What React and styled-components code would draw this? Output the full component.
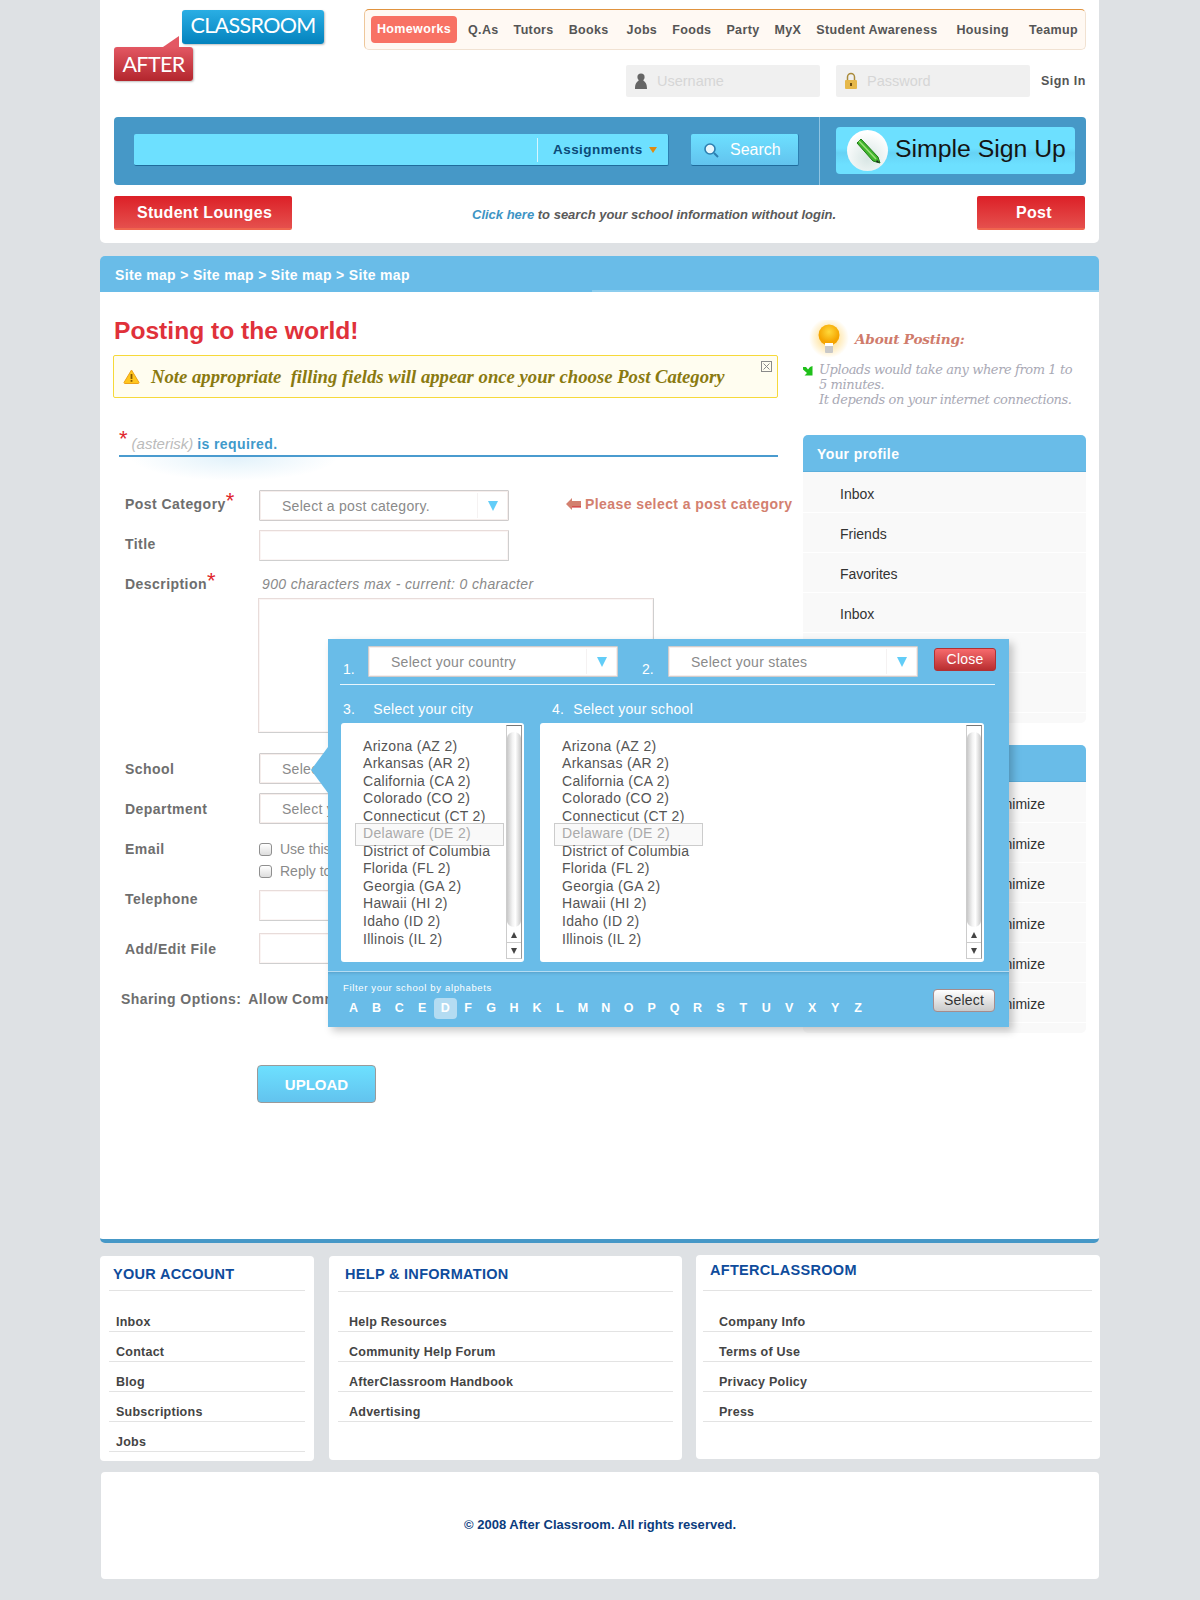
import React from "react";
import styled, { createGlobalStyle } from "styled-components";

const Global = createGlobalStyle`
  html, body { margin: 0; padding: 0; background: #dee1e4; }
  body { font-family: "Liberation Sans", Arial, sans-serif; }
  * { box-sizing: border-box; }
`;

const Page = styled.div`
  width: 1000px;
  height: 1600px;
  margin: 0 auto;
`;

/* header */
const Header = styled.header`
  width: 999px;
  height: 243px;
  background: #fff;
  padding: 0 13px 0 14px;
  border-radius: 0 0 5px 5px;
`;
const TopRow = styled.div`
  display: flex;
  justify-content: space-between;
  height: 117px;
`;
const Logo = styled.div`
  width: 210px;
  padding-top: 10px;
  display: flex;
  flex-direction: column;
  align-items: flex-start;
`;
const LogoTop = styled.div`
  margin-left: 68px;
  width: 142px;
  height: 34px;
  background: linear-gradient(#2aaee4, #0382bd);
  border-radius: 3px;
  box-shadow: 1px 1px 2px rgba(0, 0, 0, 0.25);
  color: #fff;
  font: 21.5px/31px Lato, sans-serif;
  letter-spacing: -0.65px;
  text-align: center;
`;
const LogoBottom = styled.div`
  position: relative;
  margin-top: 3px;
  width: 79px;
  height: 34px;
  background: linear-gradient(#e35863, #b3262d);
  border-radius: 3px;
  box-shadow: 1px 1px 2px rgba(0, 0, 0, 0.25);
  color: #fff;
  font: 21.5px/35px Lato, sans-serif;
  letter-spacing: -0.65px;
  text-align: center;
  &::before {
    content: "";
    position: absolute;
    left: 49px;
    top: -11px;
    width: 16px;
    height: 11px;
    background: #e35863;
    clip-path: polygon(0 100%, 100% 0, 100% 100%);
  }
`;
const TopRight = styled.div`
  width: 722px;
  padding-top: 9px;
`;
const Nav = styled.nav`
  height: 41px;
  display: flex;
  align-items: center;
  padding-left: 6px;
  background: #fff9f3;
  border: 1px solid #f1e2d2;
  border-top-color: #e0933f;
  border-left-color: #eec79a;
  border-radius: 5px;
`;
const NavItem = styled.a`
  flex: none;
  font-size: 12.5px;
  font-weight: 700;
  letter-spacing: 0.35px;
  color: #555;
  white-space: nowrap;
  margin-left: ${(p) => p.$gap || 15}px;
  ${(p) =>
    p.$active &&
    `
    margin-left: 0;
    margin-right: -5px;
    width: 86px;
    height: 27px;
    line-height: 27px;
    text-align: center;
    color: #fff;
    background: #f87264;
    border-radius: 4px;
  `}
`;
const LoginRow = styled.div`
  margin-top: 15px;
  display: flex;
  justify-content: flex-end;
  align-items: center;
  gap: 16px;
`;
const LoginField = styled.div`
  width: 194px;
  height: 32px;
  background: #f0f0f0;
  border-radius: 2px;
  display: flex;
  align-items: center;
  padding-left: 8px;
  gap: 9px;
  color: #d6d6d6;
  font-size: 14.5px;
`;
const SignIn = styled.a`
  flex: none;
  width: 44px;
  margin-left: -5px;
  margin-right: 1px;
  font-size: 12.5px;
  font-weight: 700;
  letter-spacing: 0.45px;
  color: #555;
  white-space: nowrap;
`;

const SearchBar = styled.div`
  height: 68px;
  background: #4698c7;
  border-radius: 4px;
  display: flex;
  align-items: flex-start;
`;
const SearchInput = styled.div`
  margin: 17px 0 0 20px;
  width: 535px;
  height: 32px;
  background: #6de0ff;
  border-bottom: 1px solid #1f6c9c;
  border-right: 1px solid #2d7fb0;
  border-radius: 2px;
  display: flex;
  align-items: center;
  justify-content: flex-end;
  padding-right: 9px;
`;
const Category = styled.div`
  width: 122px;
  height: 24px;
  border-left: 1px solid #d7f6ff;
  padding-left: 15px;
  display: flex;
  align-items: center;
  gap: 6px;
  color: #0b4a78;
  font-size: 13.5px;
  font-weight: 700;
  letter-spacing: 0.45px;
  white-space: nowrap;
  &::after {
    content: "";
    border: 4px solid transparent;
    border-top: 6px solid #e08a10;
    border-bottom: 0;
  }
`;
const SearchButton = styled.div`
  margin: 17px 0 0 22px;
  width: 108px;
  height: 32px;
  background: linear-gradient(#6de0ff, #62c3ee);
  border-bottom: 1px solid #1f6c9c;
  border-right: 1px solid #2d7fb0;
  border-radius: 2px;
  display: flex;
  align-items: center;
  padding-left: 12px;
  gap: 11px;
  color: #fff;
  font-size: 16px;
`;
const Divider = styled.div`
  margin-left: 20px;
  width: 1px;
  height: 68px;
  background: #8fc4e2;
`;
const SignUp = styled.div`
  margin: 10px 0 0 16px;
  width: 239px;
  height: 47px;
  border-radius: 4px;
  background: linear-gradient(#6de0ff 0 45%, #66d2f5 55%, #6de0ff 80%);
  display: flex;
  align-items: center;
  padding-left: 11px;
  gap: 7px;
  color: #141414;
  font-size: 24.8px;
  white-space: nowrap;
`;
const SignUpText = styled.span`
  padding-bottom: 3px;
`;
const SignCircle = styled.div`
  width: 41px;
  height: 41px;
  border-radius: 50%;
  background: radial-gradient(circle at 50% 70%, #d8e6e4, #fff 75%);
  display: flex;
  align-items: center;
  justify-content: center;
`;
const ActionRow = styled.div`
  margin-top: 11px;
  padding-right: 1px;
  display: flex;
  align-items: center;
`;
const RedButton = styled.a`
  flex: none;
  width: ${(p) => p.$w}px;
  height: 34px;
  padding-left: ${(p) => p.$pl || 0}px;
  background: linear-gradient(#dc2027, #e5504d);
  border-bottom: 2px solid #f0654e;
  border-radius: 2px;
  color: #fff;
  font-size: 16px;
  font-weight: 700;
  letter-spacing: 0.3px;
  line-height: 33px;
  text-align: center;
`;
const ClickText = styled.p`
  margin: 3px auto 0 180px;
  font-size: 13px;
  font-weight: 700;
  font-style: italic;
  color: #5a5a5a;
  white-space: nowrap;
  b {
    color: #3d94c4;
  }
`;

/* breadcrumb */
const Breadcrumb = styled.div`
  position: relative;
  margin-top: 13px;
  height: 36px;
  width: 999px;
  padding-left: 15px;
  background: #69bce8;
  border-radius: 5px 5px 0 0;
  color: #fff;
  font-size: 14px;
  font-weight: 700;
  letter-spacing: 0.33px;
  line-height: 38px;
  &::after {
    content: "";
    position: absolute;
    left: 492px;
    right: 0;
    bottom: 0;
    height: 2px;
    background: #8ccdee;
  }
`;

/* main */
const Main = styled.main`
  position: relative;
  width: 999px;
  height: 951px;
  background: #fff;
  border-bottom: 4px solid #4698c7;
  border-radius: 0 0 5px 5px;
  display: flex;
`;
const Left = styled.div`
  width: 703px;
  padding: 24px 0 0 13px;
`;
const Title = styled.h1`
  margin: 0 0 0 1px;
  height: 30px;
  color: #e0313a;
  font-size: 24.6px;
  line-height: 30px;
  font-weight: 700;
`;
const Note = styled.div`
  position: relative;
  margin-top: 9px;
  width: 665px;
  height: 43px;
  background: #fffdf0;
  border: 1px solid #f6d93a;
  border-radius: 2px;
  display: flex;
  align-items: center;
  padding-left: 9px;
  gap: 11px;
  color: #8a7a10;
  font: italic 700 18.7px "Liberation Serif", serif;
  white-space: pre;
`;
const NoteClose = styled.span`
  position: absolute;
  right: 5px;
  top: 5px;
  display: flex;
`;
const Required = styled.div`
  position: relative;
  margin: 30px 0 0 6px;
  width: 659px;
  height: 29px;
  border-bottom: 2px solid #4a9bcf;
  display: flex;
  align-items: flex-end;
  padding-bottom: 3px;
  font-size: 14px;
  &::after {
    content: "";
    position: absolute;
    left: 10px;
    top: 29px;
    width: 210px;
    height: 24px;
    background: radial-gradient(ellipse at 50% 0, rgba(105, 188, 232, 0.2), rgba(105, 188, 232, 0) 70%);
  }
`;
const Star = styled.span`
  margin-top: 3px;
  color: #e0262d;
  font-size: 22px;
  line-height: 16px;
  align-self: flex-start;
`;
const Hint = styled.em`
  margin-left: 4px;
  color: #bbb;
  font-size: 15px;
`;
const ReqText = styled.b`
  margin-left: 4px;
  color: #3f9acb;
  letter-spacing: 0.4px;
`;
const Form = styled.div`
  margin-left: 12px;
`;
const Row = styled.div`
  position: relative;
  display: flex;
  margin-top: ${(p) => p.$mt}px;
`;
const Label = styled.div`
  flex: none;
  width: 134px;
  padding-top: ${(p) => p.$pt || 0}px;
  line-height: ${(p) => p.$lh || 26}px;
  color: #6e6e6e;
  font-size: 14px;
  font-weight: 700;
  letter-spacing: 0.45px;
  display: flex;
  align-items: flex-start;
  white-space: nowrap;
`;
const LabelStar = styled.span`
  color: #e0262d;
  font-size: 22px;
  font-weight: 400;
  line-height: 20px;
`;
const SelectBox = styled.div`
  width: 250px;
  height: 31px;
  flex: none;
  background: #fff;
  border: 1px solid #cfcccc;
  box-shadow: inset 0 0 0 1px #f6eeec;
  border-radius: 1px;
  display: flex;
  align-items: center;
  padding-left: 22px;
  color: #8a8a8a;
  font-size: 14px;
  letter-spacing: 0.28px;
  white-space: nowrap;
`;
const SelectText = styled.span`
  flex: 1;
`;
const SelectArrow = styled.span`
  flex: none;
  width: 31px;
  height: 25px;
  border-left: 1px solid #f5f2f2;
  display: flex;
  align-items: center;
  justify-content: center;
  &::after {
    content: "";
    border: 5.5px solid transparent;
    border-top: 10px solid #62cdf8;
    border-bottom: 0;
  }
`;
const TextField = styled.div`
  width: 250px;
  height: 31px;
  border: 1px solid #cfcfcf;
  border-left-color: #e8dcda;
  border-top-color: #e8dcda;
  border-radius: 1px;
  box-shadow: inset 0 0 0 1px #fbf5f4;
`;
const FieldColumn = styled.div`
  display: flex;
  flex-direction: column;
  padding-top: ${(p) => p.$pt || 0}px;
`;
const CharHint = styled.em`
  height: 28px;
  line-height: 28px;
  padding-left: 3px;
  color: #8a8a8a;
  font-size: 14px;
  letter-spacing: 0.36px;
  white-space: nowrap;
`;
const TextArea = styled.div`
  margin-left: -1px;
  width: 396px;
  height: 135px;
  border: 1px solid #cfcfcf;
  border-left-color: #e8dcda;
  border-top-color: #e8dcda;
  box-shadow: inset 0 0 0 1px #fbf5f4;
`;
const CheckLine = styled.label`
  height: 22px;
  display: flex;
  align-items: center;
  gap: 8px;
  color: #8a8a8a;
  font-size: 14px;
  white-space: nowrap;
`;
const Check = styled.span`
  width: 13px;
  height: 13px;
  border: 1px solid #8f8f8f;
  border-radius: 3px;
  background: linear-gradient(#fff, #ddd);
`;
const Sharing = styled.div`
  display: flex;
  gap: 7px;
  margin: 25px 0 0 -4px;
  height: 18px;
  line-height: 18px;
  color: #6e6e6e;
  font-size: 14px;
  font-weight: 700;
  letter-spacing: 0.42px;
  white-space: nowrap;
`;
const Upload = styled.a`
  display: block;
  margin: 57px 0 0 132px;
  width: 119px;
  height: 38px;
  background: linear-gradient(#6de0ff, #62c3ee);
  border: 1px solid #9a9a9a;
  border-radius: 4px;
  color: #fff;
  font-size: 15px;
  font-weight: 700;
  line-height: 37px;
  text-align: center;
`;

/* sidebar */
const Side = styled.aside`
  width: 283px;
  padding-top: 33px;
`;
const About = styled.div`
  height: 110px;
`;
const AboutHead = styled.div`
  display: flex;
  align-items: center;
  gap: 5px;
  margin-left: 5px;
  height: 29px;
  color: #cf7b6b;
  font: italic 700 13.6px "DejaVu Serif", serif;
  letter-spacing: -0.2px;
`;
const AboutTitle = styled.span`
  padding-bottom: 2px;
`;
const AboutBody = styled.div`
  display: flex;
  margin-top: 8px;
  gap: 6px;
  color: #a9a9b5;
  font: italic 13px/15px "DejaVu Serif", serif;
  letter-spacing: -0.4px;
  white-space: pre-line;
`;
const PanelHead = styled.div`
  height: 37px;
  padding-left: 14px;
  background: #69bce8;
  border-bottom: 1px solid #5cafdc;
  border-radius: 5px 5px 0 0;
  color: #fff;
  font-size: 14px;
  font-weight: 700;
  letter-spacing: 0.4px;
  line-height: 38px;
`;
const PanelList = styled.ul`
  margin: 0 0 22px;
  padding: 0 0 10px;
  list-style: none;
  background: #f9f9f9;
  border-radius: 0 0 5px 5px;
`;
const PanelItem = styled.li`
  height: 40px;
  padding: 0 41px 0 37px;
  border-bottom: 1px solid #fff;
  color: #333;
  font-size: 14px;
  line-height: 42px;
  text-align: ${(p) => (p.$right ? "right" : "left")};
  &:first-child {
    height: 41px;
    line-height: 44px;
  }
`;

/* school picker */
const Picker = styled.div`
  position: absolute;
  left: 228px;
  top: 347px;
  width: 681px;
  height: 388px;
  background: #69bce8;
  box-shadow: 4px 4px 8px rgba(0, 0, 0, 0.22);
  color: #fff;
  &::before {
    content: "";
    position: absolute;
    left: -17px;
    top: 108px;
    width: 17px;
    height: 46px;
    background: #69bce8;
    clip-path: polygon(100% 0, 0 50%, 100% 100%);
  }
`;
const PickerTop = styled.div`
  height: 333px;
  padding-top: 7px;
  border-bottom: 1px solid #b5dcf2;
`;
const PickerRow = styled.div`
  display: flex;
  align-items: flex-start;
  height: 31px;
  padding-left: 15px;
`;
const Num = styled.span`
  flex: none;
  width: ${(p) => p.$w}px;
  margin-left: ${(p) => p.$ml || 0}px;
  padding-top: 15px;
  font-size: 14px;
  line-height: 16px;
`;
const CloseButton = styled.a`
  flex: none;
  margin: 2px 0 0 16px;
  width: 62px;
  height: 23px;
  background: linear-gradient(#f76a6c, #b82e30);
  border: 1px solid #b13133;
  border-radius: 3px;
  font-size: 14px;
  letter-spacing: 0.2px;
  line-height: 21px;
  text-align: center;
`;
const PickerLine = styled.div`
  margin: 7px 14px 0 12px;
  height: 1px;
  background: #e8f5fc;
`;
const StepLabels = styled.div`
  display: flex;
  margin: 15px 0 5px 15px;
  height: 18px;
  line-height: 18px;
  font-size: 14px;
  letter-spacing: 0.3px;
`;
const StepLabel = styled.span`
  width: ${(p) => p.$w}px;
  display: flex;
  gap: ${(p) => p.$gap}px;
`;
const Lists = styled.div`
  display: flex;
  gap: 16px;
  margin-left: 13px;
`;
const ListBox = styled.div`
  width: ${(p) => p.$w}px;
  height: 239px;
  background: #fff;
  border-radius: 3px;
  display: flex;
  padding: 2px 2px 3px 0;
`;
const Options = styled.ul`
  flex: 1;
  margin: 0;
  padding: 12.5px 0 0 22px;
  list-style: none;
  color: #555;
  font-size: 14px;
  letter-spacing: 0.3px;
  line-height: 17.55px;
`;
const Option = styled.li`
  position: relative;
  white-space: nowrap;
  ${(p) =>
    p.$selected &&
    `
    color: #aaa;
    &::before {
      content: "";
      position: absolute;
      left: -8px;
      top: -2px;
      width: 147px;
      height: 21px;
      background: #f9f9f9;
      border: 1px solid #ccc;
    }
  `}
`;
const OptionText = styled.span`
  position: relative;
`;
const ScrollBar = styled.div`
  flex: none;
  width: 16px;
  display: flex;
  flex-direction: column;
  align-items: center;
  border-top: 1px solid #777;
  border-right: 1px solid #999;
  border-left: 1px solid #ccc;
  border-bottom: 1px solid #ccc;
`;
const ScrollThumb = styled.div`
  margin-top: 6px;
  width: 14px;
  height: 195px;
  border-radius: 7px / 6px;
  background: linear-gradient(90deg, #c8c8c8, #f4f4f4 40%, #fff 60%, #c8c8c8);
`;
const ScrollArrow = styled.div`
  flex: 1;
  width: 100%;
  display: flex;
  align-items: center;
  justify-content: center;
  border-top: ${(p) => (p.$down ? "1px solid #ccc" : "0")};
  &::after {
    content: "";
    border: 3.5px solid transparent;
    ${(p) => (p.$down ? "border-top: 6px solid #444; border-bottom: 0;" : "border-bottom: 6px solid #444; border-top: 0;")}
  }
`;
const PickerBottom = styled.div`
  position: relative;
  padding: 10px 0 0 15px;
  box-shadow: inset 0 3px 3px -2px rgba(70, 130, 170, 0.5);
`;
const FilterLabel = styled.div`
  font-size: 9.5px;
  letter-spacing: 0.65px;
  line-height: 12px;
`;
const Letters = styled.div`
  display: flex;
  margin: 4px 0 0 -1px;
`;
const Letter = styled.span`
  width: 22.95px;
  height: 21px;
  line-height: 21px;
  text-align: center;
  font-size: 12.5px;
  font-weight: 700;
  border-radius: 4px;
  background: ${(p) => (p.$active ? "#b4dcf2" : "transparent")};
`;
const SelectButton = styled.a`
  position: absolute;
  right: 14px;
  top: 17px;
  width: 62px;
  height: 23px;
  background: linear-gradient(#fff, #c9c9c9);
  border: 1px solid #a58c8c;
  border-radius: 4px;
  color: #333;
  font-size: 14px;
  letter-spacing: 0.2px;
  line-height: 21px;
  text-align: center;
`;

/* footer */
const FooterCols = styled.div`
  display: flex;
  align-items: flex-start;
  gap: 14px;
  margin-top: 13px;
`;
const FooterCard = styled.section`
  flex: none;
  width: ${(p) => p.$w}px;
  height: ${(p) => p.$h || 204}px;
  margin-top: ${(p) => p.$mt || 0}px;
  margin-right: ${(p) => p.$mr || 0}px;
  padding: 0 ${(p) => p.$pr}px 0 ${(p) => p.$pl}px;
  background: #fff;
  border-radius: 4px;
`;
const FooterTitle = styled.h3`
  margin: 0;
  height: ${(p) => p.$h}px;
  padding: ${(p) => p.$pt}px 0 0 ${(p) => p.$pl}px;
  border-bottom: 1px solid #e3e3e3;
  color: #0f4c9c;
  font-size: 14.5px;
  line-height: 18px;
  font-weight: 700;
  letter-spacing: 0.3px;
  white-space: nowrap;
`;
const FooterList = styled.ul`
  margin: ${(p) => p.$mt}px 0 0;
  padding: 0;
  list-style: none;
`;
const FooterItem = styled.li`
  height: 30px;
  padding-left: ${(p) => p.$pl}px;
  border-bottom: 1px solid #e3e3e3;
  color: #444;
  font-size: 12.5px;
  font-weight: 700;
  letter-spacing: 0.25px;
  line-height: 41px;
  overflow: hidden;
`;
const Copyright = styled.div`
  margin: 11px 0 0 1px;
  width: 998px;
  height: 107px;
  background: #fff;
  border-radius: 4px;
  text-align: center;
  color: #0b3c7d;
  font-size: 13px;
  font-weight: 700;
  letter-spacing: 0.03px;
  line-height: 105px;
`;
const PleaseSelect = styled.div`
  position: absolute;
  left: 441px;
  top: 3px;
  height: 22px;
  line-height: 22px;
  color: #d3806f;
  font-size: 14px;
  font-weight: 700;
  letter-spacing: 0.42px;
  white-space: nowrap;
  display: flex;
  align-items: center;
  gap: 4px;
`;

const UserIcon = () => (
  <svg width="14" height="18" viewBox="0 0 14 18">
    <circle cx="7" cy="5" r="3.6" fill="#666" />
    <path d="M5 8 C3 10 1 11 1 17 H13 C13 11 11 10 9 8 Z" fill="#666" />
  </svg>
);
const LockIcon = () => (
  <svg width="14" height="18" viewBox="0 0 14 18">
    <path d="M3.5 9 V5 a3.5 3.5 0 0 1 7 0 V9" fill="none" stroke="#a98a3a" strokeWidth="1.5" />
    <rect x="1" y="8" width="12" height="9" rx="1" fill="#e6b84a" />
    <rect x="6" y="11" width="2" height="3" fill="#6b4c10" />
  </svg>
);
const SearchIcon = () => (
  <svg width="16" height="16" viewBox="0 0 16 16">
    <circle cx="7" cy="7" r="5" fill="#eaf7fc" stroke="#2d7fb0" strokeWidth="1.6" />
    <path d="M11 11 L15 15" stroke="#2d7fb0" strokeWidth="2" />
  </svg>
);
const PencilIcon = () => (
  <svg width="26" height="28" viewBox="0 0 26 28">
    <path d="M2 6 L6 2 L23 20 L25 26 L18 24 Z" fill="#3fb52c" stroke="#1f7a18" strokeWidth="1" />
    <path d="M4 4 L21 22" stroke="#9de07a" strokeWidth="1.5" />
    <path d="M22 23 L25 26 L21 25 Z" fill="#222" />
  </svg>
);
const WarnIcon = () => (
  <svg width="17" height="15" viewBox="0 0 17 15">
    <path d="M8.5 1 L16 13.5 Q16 14.5 15 14.5 H2 Q1 14.5 1 13.5 Z" fill="#ffc61e" stroke="#eda21a" />
    <rect x="7.6" y="5" width="1.8" height="5" fill="#8a5a00" />
    <rect x="7.6" y="11" width="1.8" height="1.8" fill="#8a5a00" />
  </svg>
);
const CloseIcon = () => (
  <svg width="11" height="11" viewBox="0 0 11 11">
    <rect x="0.5" y="0.5" width="10" height="10" fill="none" stroke="#8a8a8a" />
    <path d="M2.5 2.5 L8.5 8.5 M8.5 2.5 L2.5 8.5" stroke="#8a8a8a" />
  </svg>
);
const BulbIcon = () => (
  <svg width="42" height="40" viewBox="0 0 42 40">
    <defs>
      <radialGradient id="glow">
        <stop offset="0.4" stopColor="#ffd46a" stopOpacity="0.6" />
        <stop offset="1" stopColor="#ffd46a" stopOpacity="0" />
      </radialGradient>
      <radialGradient id="bulb" cx="0.5" cy="0.35">
        <stop offset="0" stopColor="#ffd93a" />
        <stop offset="1" stopColor="#f5a400" />
      </radialGradient>
    </defs>
    <circle cx="21" cy="18" r="20" fill="url(#glow)" />
    <circle cx="21" cy="15" r="10.5" fill="url(#bulb)" />
    <rect x="17" y="23" width="8" height="10" rx="1" fill="#c8c8c8" />
    <rect x="17" y="23" width="8" height="3" fill="#fff" />
  </svg>
);
const GreenArrowWrap = styled.svg`
  flex: none;
  margin-top: 4px;
`;
const GreenArrow = () => (
  <GreenArrowWrap width="10" height="10" viewBox="0 0 10 10">
    <path d="M0 1 H3 L5 3.5 L7 1 L9.5 0 V9.5 H1.5 L4 7 L0 3.5 Z" fill="#1fc01a" />
  </GreenArrowWrap>
);
const RedArrow = () => (
  <svg width="15" height="12" viewBox="0 0 15 12">
    <path d="M0 6 L6 0 V3 H15 V9 H6 V12 Z" fill="#d3806f" />
    <path d="M6 9 H15" stroke="#d3202a" strokeWidth="1" />
  </svg>
);

const STATES = [
  "Arizona (AZ 2)",
  "Arkansas (AR 2)",
  "California (CA 2)",
  "Colorado (CO 2)",
  "Connecticut (CT 2)",
  "Delaware (DE 2)",
  "District of Columbia",
  "Florida (FL 2)",
  "Georgia (GA 2)",
  "Hawaii (HI 2)",
  "Idaho (ID 2)",
  "Illinois (IL 2)",
];
const LETTERS = "A B C E D F G H K L M N O P Q R S T U V X Y Z".split(" ");
const NAV = [
  ["Q.As", 16],
  ["Tutors", 15],
  ["Books", 15],
  ["Jobs", 18],
  ["Foods", 15],
  ["Party", 15],
  ["MyX", 15],
  ["Student Awareness", 15],
  ["Housing", 19],
  ["Teamup", 20],
];

const Select = ({ children }) => (
  <SelectBox>
    <SelectText>{children}</SelectText>
    <SelectArrow />
  </SelectBox>
);

const StateList = ({ w }) => (
  <ListBox $w={w}>
    <Options>
      {STATES.map((s) => (
        <Option key={s} $selected={s.startsWith("Delaware")}>
          <OptionText>{s}</OptionText>
        </Option>
      ))}
    </Options>
    <ScrollBar>
      <ScrollThumb />
      <ScrollArrow />
      <ScrollArrow $down />
    </ScrollBar>
  </ListBox>
);

const FooterBlock = ({ title, items, w, h, mt, mr, pl, pr, titleH, titlePt, titlePl, listMt, itemPl }) => (
  <FooterCard $w={w} $h={h} $mt={mt} $mr={mr} $pl={pl} $pr={pr}>
    <FooterTitle $h={titleH} $pt={titlePt} $pl={titlePl}>
      {title}
    </FooterTitle>
    <FooterList $mt={listMt}>
      {items.map((i) => (
        <FooterItem key={i} $pl={itemPl}>
          {i}
        </FooterItem>
      ))}
    </FooterList>
  </FooterCard>
);

export default function App() {
  return (
    <Page>
      <Global />
      <Header>
        <TopRow>
          <Logo>
            <LogoTop>CLASSROOM</LogoTop>
            <LogoBottom>AFTER</LogoBottom>
          </Logo>
          <TopRight>
            <Nav>
              <NavItem $active>Homeworks</NavItem>
              {NAV.map(([n, g]) => (
                <NavItem key={n} $gap={g}>
                  {n}
                </NavItem>
              ))}
            </Nav>
            <LoginRow>
              <LoginField>
                <UserIcon />
                Username
              </LoginField>
              <LoginField>
                <LockIcon />
                Password
              </LoginField>
              <SignIn>Sign In</SignIn>
            </LoginRow>
          </TopRight>
        </TopRow>
        <SearchBar>
          <SearchInput>
            <Category>Assignments</Category>
          </SearchInput>
          <SearchButton>
            <SearchIcon />
            Search
          </SearchButton>
          <Divider />
          <SignUp>
            <SignCircle>
              <PencilIcon />
            </SignCircle>
            <SignUpText>Simple Sign Up</SignUpText>
          </SignUp>
        </SearchBar>
        <ActionRow>
          <RedButton $w={178} $pl={3}>
            Student Lounges
          </RedButton>
          <ClickText>
            <b>Click here</b> to search your school information without login.
          </ClickText>
          <RedButton $w={108} $pl={6}>
            Post
          </RedButton>
        </ActionRow>
      </Header>

      <Breadcrumb>Site map &gt; Site map &gt; Site map &gt; Site map</Breadcrumb>
      <Main>
        <Left>
          <Title>Posting to the world!</Title>
          <Note>
            <WarnIcon />
            {"Note appropriate  filling fields will appear once your choose Post Category"}
            <NoteClose>
              <CloseIcon />
            </NoteClose>
          </Note>
          <Required>
            <Star>*</Star>
            <Hint>(asterisk)</Hint>
            <ReqText>is required.</ReqText>
          </Required>
          <Form>
            <Row $mt={33}>
              <Label $pt={1}>
                Post Category<LabelStar>*</LabelStar>
              </Label>
              <Select>Select a post category.</Select>
              <PleaseSelect>
                <RedArrow />
                Please select a post category
              </PleaseSelect>
            </Row>
            <Row $mt={9}>
              <Label $pt={1}>Title</Label>
              <TextField />
            </Row>
            <Row $mt={9}>
              <Label $pt={1}>
                Description<LabelStar>*</LabelStar>
              </Label>
              <FieldColumn>
                <CharHint>900 characters max - current: 0 character</CharHint>
                <TextArea />
              </FieldColumn>
            </Row>
            <Row $mt={20}>
              <Label $lh={30} $pt={1}>
                School
              </Label>
              <Select>Select your school</Select>
            </Row>
            <Row $mt={9}>
              <Label $lh={30} $pt={1}>
                Department
              </Label>
              <Select>Select your department</Select>
            </Row>
            <Row $mt={12}>
              <Label>Email</Label>
              <FieldColumn $pt={2}>
                <CheckLine>
                  <Check />
                  Use this email
                </CheckLine>
                <CheckLine>
                  <Check />
                  Reply to this
                </CheckLine>
              </FieldColumn>
            </Row>
            <Row $mt={8}>
              <Label $lh={18}>Telephone</Label>
              <TextField />
            </Row>
            <Row $mt={12}>
              <Label $lh={32}>Add/Edit File</Label>
              <TextField />
            </Row>
            <Sharing>
              <span>Sharing Options:</span>
              <span>Allow Comments</span>
            </Sharing>
            <Upload>UPLOAD</Upload>
          </Form>
        </Left>
        <Side>
          <About>
            <AboutHead>
              <BulbIcon />
              <AboutTitle>About Posting:</AboutTitle>
            </AboutHead>
            <AboutBody>
              <GreenArrow />
              <div>
                Uploads would take any where from 1 to{"\n"}5 minutes.{"\n"}It depends on your internet connections.
              </div>
            </AboutBody>
          </About>
          <PanelHead>Your profile</PanelHead>
          <PanelList>
            {["Inbox", "Friends", "Favorites", "Inbox", "Friends", "Favorites"].map((t, i) => (
              <PanelItem key={i}>{t}</PanelItem>
            ))}
          </PanelList>
          <PanelHead>Your settings</PanelHead>
          <PanelList>
            {[0, 1, 2, 3, 4, 5].map((i) => (
              <PanelItem key={i} $right>
                Minimize
              </PanelItem>
            ))}
          </PanelList>
        </Side>

        <Picker>
          <PickerTop>
            <PickerRow>
              <Num $w={25}>1.</Num>
              <Select>Select your country</Select>
              <Num $w={26} $ml={24}>
                2.
              </Num>
              <Select>Select your states</Select>
              <CloseButton>Close</CloseButton>
            </PickerRow>
            <PickerLine />
            <StepLabels>
              <StepLabel $w={209} $gap={18}>
                <span>3.</span>
                <span>Select your city</span>
              </StepLabel>
              <StepLabel $w={300} $gap={9}>
                <span>4.</span>
                <span>Select your school</span>
              </StepLabel>
            </StepLabels>
            <Lists>
              <StateList w={183} />
              <StateList w={444} />
            </Lists>
          </PickerTop>
          <PickerBottom>
            <FilterLabel>Filter your school by alphabets</FilterLabel>
            <Letters>
              {LETTERS.map((l) => (
                <Letter key={l} $active={l === "D"}>
                  {l}
                </Letter>
              ))}
            </Letters>
            <SelectButton>Select</SelectButton>
          </PickerBottom>
        </Picker>
      </Main>

      <FooterCols>
        <FooterBlock
          title="YOUR ACCOUNT"
          items={["Inbox", "Contact", "Blog", "Subscriptions", "Jobs"]}
          w={214}
          h={205}
          mr={1}
          pl={9}
          pr={9}
          titleH={35}
          titlePt={9}
          titlePl={4}
          listMt={11}
          itemPl={7}
        />
        <FooterBlock
          title="HELP & INFORMATION"
          items={["Help Resources", "Community Help Forum", "AfterClassroom Handbook", "Advertising"]}
          w={353}
          pl={9}
          pr={9}
          titleH={36}
          titlePt={9}
          titlePl={7}
          listMt={10}
          itemPl={11}
        />
        <FooterBlock
          title="AFTERCLASSROOM"
          items={["Company Info", "Terms of Use", "Privacy Policy", "Press"]}
          w={404}
          mt={-1}
          pl={7}
          pr={8}
          titleH={36}
          titlePt={6}
          titlePl={7}
          listMt={11}
          itemPl={16}
        />
      </FooterCols>
      <Copyright>© 2008 After Classroom. All rights reserved.</Copyright>
    </Page>
  );
}
